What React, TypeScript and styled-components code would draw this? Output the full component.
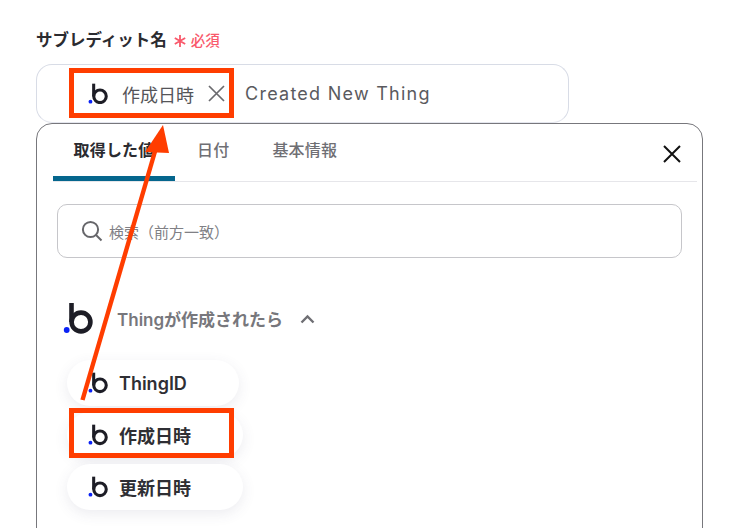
import React from "react";
import styled, { createGlobalStyle } from "styled-components";

const GlobalStyle = createGlobalStyle`
  html, body {
    margin: 0;
    padding: 0;
    background: #fff;
  }
  body {
    font-family: Inter, "Noto Sans CJK JP", sans-serif;
  }
`;

const Page = styled.div`
  position: relative;
  width: 748px;
  height: 528px;
  overflow: hidden;
  padding: 27px 45px 0 36px;
  box-sizing: border-box;
`;

const LabelRow = styled.div`
  display: flex;
  align-items: center;
  height: 24px;
  margin-bottom: 13px;
`;

const Label = styled.span`
  font-size: 16.5px;
  font-weight: 600;
  color: #2b2b30;
`;

const Asterisk = styled.svg`
  margin: 3px 4px 0 6px;
`;

const Required = styled.span`
  font-size: 14.5px;
  font-weight: 500;
  color: #f9596b;
  margin-top: 1px;
`;

const InputBox = styled.div`
  display: flex;
  align-items: center;
  box-sizing: border-box;
  width: 533px;
  height: 59px;
  padding-left: 51px;
  border: 1px solid #d8dce6;
  border-bottom-color: #e4e6ee;
  border-radius: 16px;
`;

const InputTag = styled.span`
  margin-left: 14px;
  font-size: 18px;
  color: #555559;
`;

const TagClose = styled.svg`
  margin-left: 14px;
`;

const InputText = styled.span`
  margin-left: 20px;
  font-size: 18px;
  letter-spacing: 1.25px;
  color: #5a5a5e;
`;

const Panel = styled.div`
  box-sizing: border-box;
  width: 667px;
  height: 480px;
  padding: 0 5px 0 16px;
  border: 1px solid #77777c;
  border-radius: 16px;
`;

const TabBar = styled.div`
  display: flex;
  align-items: stretch;
  height: 57px;
  border-bottom: 1px solid #e6e6ea;
`;

const Tab = styled.div<{ $active?: boolean }>`
  display: flex;
  align-items: center;
  justify-content: center;
  box-sizing: border-box;
  height: 57px;
  width: ${(p) => (p.$active ? "122px" : "auto")};
  margin-right: ${(p) => (p.$active ? "22px" : "43px")};
  padding-bottom: 3px;
  font-size: 16px;
  font-weight: ${(p) => (p.$active ? 700 : 500)};
  letter-spacing: 0.2px;
  color: ${(p) => (p.$active ? "#2b2b30" : "#6f6f74")};
  border-bottom: 5px solid ${(p) => (p.$active ? "#05668d" : "transparent")};
  border-radius: 6px 6px 0 0;
`;

const PanelClose = styled.svg`
  margin: 21px 16px 0 auto;
`;

const SearchBox = styled.div`
  display: flex;
  align-items: center;
  box-sizing: border-box;
  width: 625px;
  height: 54px;
  margin: 22px 0 0 4px;
  padding-left: 23px;
  border: 1px solid #c6c6ca;
  border-radius: 10px;
`;

const Placeholder = styled.span`
  margin-left: 6px;
  font-size: 15px;
  color: #808085;
`;

const SectionHead = styled.div`
  display: flex;
  align-items: center;
  height: 34px;
  margin: 43px 0 0 10px;
`;

const SectionTitle = styled.span`
  margin-left: 24px;
  font-size: 17px;
  font-weight: 600;
  color: #77777c;
`;

const Chevron = styled.svg`
  margin: 2px 0 0 17px;
`;

const ChipList = styled.div`
  display: flex;
  flex-direction: column;
  align-items: flex-start;
  gap: 6px;
  margin: 25px 0 0 14px;
`;

const Chip = styled.div<{ $width: number }>`
  display: flex;
  align-items: center;
  box-sizing: border-box;
  width: ${(p) => p.$width}px;
  height: 46px;
  padding-left: 21px;
  border-radius: 23px;
  background: #fff;
  box-shadow: 0 4px 14px rgba(70, 70, 110, 0.1);
`;

const ChipText = styled.span`
  margin-left: 11px;
  font-size: 18px;
  font-weight: 600;
  color: #2f2f34;
`;

const Highlight = styled.div<{ $top: number }>`
  position: absolute;
  left: 69px;
  top: ${(p) => p.$top}px;
  width: 165px;
  height: 50px;
  box-sizing: border-box;
  border: 5px solid #ff3d00;
`;

const ArrowLayer = styled.svg`
  position: absolute;
  inset: 0;
  pointer-events: none;
`;

const BubbleLogo = ({ size = 20 }: { size?: number }) => (
  <svg width={size} height={(size * 32) / 30} viewBox="0 0 30 32" style={{ flexShrink: 0 }}>
    <path d="M8.5 1v19" stroke="#1d1d26" strokeWidth="4.6" fill="none" />
    <circle cx="18" cy="20" r="9.4" stroke="#1d1d26" strokeWidth="4.6" fill="none" />
    <circle cx="3.7" cy="28" r="2.9" fill="#0a22f5" />
  </svg>
);

const fields = [
  { name: "ThingID", width: 172 },
  { name: "作成日時", width: 176 },
  { name: "更新日時", width: 176 },
];

const App = () => {
  return (
    <Page>
      <GlobalStyle />
      <LabelRow>
        <Label>サブレディット名</Label>
        <Asterisk width="14" height="14" viewBox="0 0 14 14">
          <path d="M7 1v12M1.8 4l10.4 6M12.2 4L1.8 10" stroke="#f9596b" strokeWidth="1.8" />
        </Asterisk>
        <Required>必須</Required>
      </LabelRow>

      <InputBox>
        <BubbleLogo />
        <InputTag>作成日時</InputTag>
        <TagClose width="17" height="17" viewBox="0 0 17 17">
          <path d="M1 1l15 15M16 1L1 16" stroke="#6a6a6e" strokeWidth="1.7" />
        </TagClose>
        <InputText>Created New Thing</InputText>
      </InputBox>

      <Panel>
        <TabBar>
          <Tab $active>取得した値</Tab>
          <Tab>日付</Tab>
          <Tab>基本情報</Tab>
          <PanelClose width="18" height="18" viewBox="0 0 18 18">
            <path d="M1 1l16 16M17 1L1 17" stroke="#111" strokeWidth="2" />
          </PanelClose>
        </TabBar>

        <SearchBox>
          <svg width="22" height="22" viewBox="0 0 22 22">
            <circle cx="9.5" cy="9.5" r="7.6" stroke="#66666a" strokeWidth="2" fill="none" />
            <path d="M15 15l5.5 5.5" stroke="#66666a" strokeWidth="2" />
          </svg>
          <Placeholder>検索（前方一致）</Placeholder>
        </SearchBox>

        <SectionHead>
          <BubbleLogo size={30} />
          <SectionTitle>Thingが作成されたら</SectionTitle>
          <Chevron width="15" height="10" viewBox="0 0 15 10">
            <path d="M1.5 8.5l6-6 6 6" stroke="#6f6f74" strokeWidth="2.4" fill="none" />
          </Chevron>
        </SectionHead>

        <ChipList>
          {fields.map((field) => (
            <Chip key={field.name} $width={field.width}>
              <BubbleLogo />
              <ChipText>{field.name}</ChipText>
            </Chip>
          ))}
        </ChipList>
      </Panel>

      <Highlight $top={68} />
      <Highlight $top={408} />

      <ArrowLayer width="748" height="528" viewBox="0 0 748 528">
        <path d="M82.5 400L156 148" stroke="#ff3d00" strokeWidth="4.4" fill="none" />
        <path d="M163 125L145 152L169 153Z" fill="#ff3d00" />
      </ArrowLayer>
    </Page>
  );
};

export default App;
